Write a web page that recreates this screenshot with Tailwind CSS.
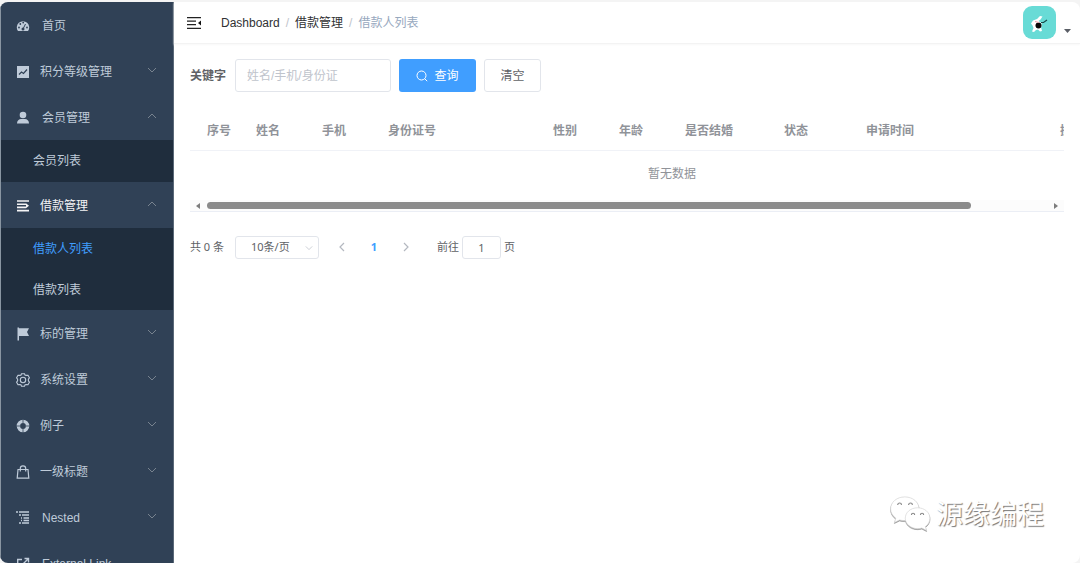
<!DOCTYPE html>
<html lang="zh-CN">
<head>
<meta charset="utf-8">
<title>借款人列表</title>
<script src="https://cdn.jsdelivr.net/npm/@tailwindcss/browser@4"></script>
</head>
<body class="h-screen overflow-hidden bg-[#f4f4f4] pt-0.5 font-['Liberation_Sans','Noto_Sans_CJK_SC',sans-serif] text-xs text-[#606266]">
<svg class="hidden">
  <symbol id="down" viewBox="0 0 10 10"><path d="M1 3l4 4 4-4" fill="none" stroke="currentColor"/></symbol>
  <symbol id="up" viewBox="0 0 10 10"><path d="M1 7l4-4 4 4" fill="none" stroke="currentColor"/></symbol>
</svg>
<div class="relative flex h-full overflow-hidden rounded-lg bg-white">
  <nav class="w-[174px] shrink-0 overflow-hidden border-x border-l-[#8995a1] border-r-[#5b6978] bg-[#304156] text-[#bfcbd9]">
    <a href="#" class="flex h-[46px] items-center pt-0.5 pl-[15px]">
      <svg class="mr-3 size-3.5" viewBox="0 0 14 14"><path fill="currentColor" d="M2 12A6.200 6.200 0 1 1 12 12z"/><g fill="#304156"><circle cx="3" cy="8.500" r=".9"/><circle cx="4.300" cy="5" r=".9"/><circle cx="7.200" cy="3.600" r=".9"/><circle cx="11" cy="8.500" r=".9"/><circle cx="7" cy="10" r="1.500"/></g><path d="M7 10l2.500-5" stroke="#304156"/></svg>
      <span>首页</span>
    </a>
    <a href="#" class="flex h-[46px] items-center pt-0.5 pr-4 pl-[15px]">
      <svg class="mr-2.5 size-3.5" viewBox="0 0 14 14"><path fill="currentColor" d="M1 1h12v12H1z"/><path d="M3 9.500l2.500-2.500 2 1.500 3.500-4" fill="none" stroke="#304156" stroke-width="1.200"/></svg>
      <span>积分等级管理</span><svg class="mb-1 ml-auto size-2.5 text-[#78838f]"><use href="#down"/></svg>
    </a>
    <a href="#" class="flex h-[46px] items-center pt-0.5 pr-4 pl-[15px]">
      <svg class="mr-3 size-3.5" viewBox="0 0 14 14" fill="currentColor"><circle cx="7" cy="4" r="3.300"/><path d="M1 12.500c0-3 2-4.500 4-4.500h4c2 0 4 1.500 4 4.500z"/></svg>
      <span>会员管理</span><svg class="mb-1 ml-auto size-2.5 text-[#78838f]"><use href="#up"/></svg>
    </a>
    <a href="#" class="flex h-[42px] items-center bg-[#1f2d3d] pl-8">会员列表</a>
    <a href="#" class="flex h-[46px] items-center pt-0.5 pr-4 pl-[15px] text-[#f4f4f5]">
      <svg class="mr-2.5 size-3.5" viewBox="0 0 14 14" stroke="currentColor" stroke-width="1.600"><path d="M1 2h12M1 5.200h9M1 8.400h9M1 11.600h12"/><path d="M10 4.300l3 2.500-3 2.500z" fill="currentColor" stroke="none"/></svg>
      <span>借款管理</span><svg class="mb-1 ml-auto size-2.5 text-[#78838f]"><use href="#up"/></svg>
    </a>
    <a href="#" class="flex h-[41px] items-center bg-[#1f2d3d] pl-8 text-[#409eff]">借款人列表</a>
    <a href="#" class="flex h-[41px] items-center bg-[#1f2d3d] pl-8">借款列表</a>
    <a href="#" class="flex h-[46px] items-center pt-0.5 pr-4 pl-[15px]">
      <svg class="mr-2.5 size-3.5" viewBox="0 0 14 14" fill="currentColor"><path d="M1.500 .5h1.500v13h-1.500zM3 1.300h10l-2 3.700 2 4H3z"/></svg>
      <span>标的管理</span><svg class="mb-1 ml-auto size-2.5 text-[#78838f]"><use href="#down"/></svg>
    </a>
    <a href="#" class="flex h-[46px] items-center pt-0.5 pr-4 pl-[15px]">
      <svg class="mr-2.5 size-3.5" viewBox="0 0 14 14" fill="none" stroke="currentColor" stroke-width="1.100"><path d="M5.500 .7h3l.6 1.500 1.600.2 1.300-.1 1.400 2.500-1 1.300v1.800l1 1.300-1.400 2.500-1.300-.1-1.600.2-.6 1.500h-3l-.6-1.500-1.600-.2-1.300.1L.6 9.200l1-1.300V6.100l-1-1.300L2 2.300l1.300.1 1.600-.2z"/><circle cx="7" cy="7" r="2.700"/></svg>
      <span>系统设置</span><svg class="mb-1 ml-auto size-2.5 text-[#78838f]"><use href="#down"/></svg>
    </a>
    <a href="#" class="flex h-[46px] items-center pt-0.5 pr-4 pl-[15px]">
      <svg class="mr-2.5 size-3.5" viewBox="0 0 14 14" fill="none"><circle cx="7" cy="7" r="4.600" stroke="currentColor" stroke-width="3.400"/><path d="M7 .5v3.500M7 10v3.500M.5 7h3.500M10 7h3.500" stroke="#304156" stroke-width=".8"/></svg>
      <span>例子</span><svg class="mb-1 ml-auto size-2.5 text-[#78838f]"><use href="#down"/></svg>
    </a>
    <a href="#" class="flex h-[46px] items-center pt-0.5 pr-4 pl-[15px]">
      <svg class="mr-2.5 size-3.5" viewBox="0 0 14 14" fill="none" stroke="currentColor" stroke-width="1.200"><path d="M2 4.500h10l.8 8.700H1.200zM4.300 6.500V3.500a2.700 2.700 0 0 1 5.400 0v3"/></svg>
      <span>一级标题</span><svg class="mb-1 ml-auto size-2.5 text-[#78838f]"><use href="#down"/></svg>
    </a>
    <a href="#" class="flex h-[46px] items-center pt-0.5 pr-4 pl-[15px]">
      <svg class="mr-3 size-3.5" viewBox="0 0 14 14" stroke="currentColor" stroke-width="1.300"><path d="M0 1h2M3 1h10M3 4h2M6 4h7M5 7h1M7.500 7H13M5 9.500h1M7.500 9.500H13M3 12h2M6 12h7"/></svg>
      <span>Nested</span><svg class="mb-1 ml-auto size-2.5 text-[#78838f]"><use href="#down"/></svg>
    </a>
    <a href="#" class="flex h-[46px] items-center pt-0.5 pl-[15px]">
      <svg class="mr-3 size-3.5" viewBox="0 0 14 14" fill="none" stroke="currentColor" stroke-width="1.400"><path d="M6 2.500H1.700v10h10V8M8.500 1.500h4v4M12.500 1.500L6.500 7.500"/></svg>
      <span>External Link</span>
    </a>
  </nav>

  <div class="min-w-0 flex-1">
    <header class="flex h-[42px] items-center border-b border-[#f3f3f3] pr-[9px] pl-[13px] shadow-[0_1px_2px_#f8f8f8]">
      <button aria-label="收起菜单"><svg class="block h-3 w-3.5" viewBox="0 0 14 12"><path d="M0 .7h14M0 4.200h9M0 7.700h9M0 11.300h14" stroke="#222" stroke-width="1.300"/><path d="M14 3.500v5L11 6z" fill="#111"/></svg></button>
      <nav aria-label="面包屑" class="ml-5 flex items-center text-[#303133]">
        <a href="#">Dashboard</a><span class="mx-1.5 text-[#c0c4cc]">/</span><a href="#">借款管理</a><span class="mx-1.5 text-[#c0c4cc]">/</span><span class="text-[#97a8be]">借款人列表</span>
      </nav>
      <button aria-label="用户菜单" class="ml-auto flex items-center">
        <svg class="size-[33px]" viewBox="0 0 33 33"><rect width="33" height="33" rx="9" fill="#68dbd6"/><path d="M8 17.500l2-3 4-1.500 3-3 2.500.5-2 3-2 1.500 3 2 .5 3-1 1 1 4-2 .5-2-2-2 .5-2 2-2-.5 1.500-3.500-1-2.500z" fill="#fff"/><circle cx="15.500" cy="19.500" r="3" fill="#080808"/><path d="M12 15.500l4 1" stroke="#e9a0a8"/><path d="M18 16.500l2.500 0 3.500-2.500" fill="none" stroke="#174b49" stroke-width="1.200"/></svg>
        <svg class="mt-4 ml-2 h-1 w-[7px]" viewBox="0 0 7 4"><path d="M0 0h7L3.500 4z" fill="#5a5e66"/></svg>
      </button>
    </header>

    <main class="px-4 pt-[15px]">
      <form class="flex items-center">
        <label for="kw" class="w-[45px] font-bold">关键字</label>
        <input id="kw" placeholder="姓名/手机/身份证" class="h-[33px] w-[156px] rounded-[3px] border border-[#e2e5eb] px-[11px] outline-none placeholder:text-[#c0c4cc]">
        <button type="button" class="ml-2 flex h-[33px] w-[77px] items-center justify-center gap-1.5 rounded-[3px] bg-[#409eff] text-white"><svg class="size-3" viewBox="0 0 12 12" fill="none" stroke="currentColor"><circle cx="5.500" cy="5.500" r="4.500"/><path d="M8.700 8.700l2.500 2.500"/></svg>查询</button>
        <button type="button" class="ml-2 h-[33px] w-[57px] rounded-[3px] border border-[#e2e5eb]">清空</button>
      </form>

      <div class="mt-[18px] border-b border-[#ebeef5]">
        <div class="overflow-hidden">
          <table class="w-[964px] table-fixed text-left text-[#909399]">
            <colgroup><col class="w-[58px]"><col class="w-[66px]"><col class="w-[66px]"><col class="w-[165px]"><col class="w-[66px]"><col class="w-[66px]"><col class="w-[99px]"><col class="w-[82px]"><col class="w-[194px]"><col></colgroup>
            <thead>
              <tr class="h-10 border-b border-[#f0f2f7]">
                <th class="pt-0.5 text-center">序号</th><th class="px-2 pt-0.5">姓名</th><th class="px-2 pt-0.5">手机</th><th class="px-2 pt-0.5">身份证号</th><th class="px-2 pt-0.5">性别</th><th class="px-2 pt-0.5">年龄</th><th class="px-2 pt-0.5">是否结婚</th><th class="px-2 pt-0.5">状态</th><th class="px-2 pt-0.5">申请时间</th><th class="px-2 pt-0.5">操作</th>
              </tr>
            </thead>
            <tbody><tr class="h-[50px]"><td colspan="10" class="pb-0.5 text-center">暂无数据</td></tr></tbody>
          </table>
        </div>
        <div class="flex h-[11px] items-center bg-[#fcfcfc] px-1.5">
          <svg class="mr-[7px] h-1.5 w-1" viewBox="0 0 4 6"><path d="M4 0v6L0 3z" fill="#7d7d7d"/></svg>
          <div class="flex-1"><div class="h-[7px] w-[91%] rounded-full bg-[#8b8b8b]"></div></div>
          <svg class="ml-[7px] h-1.5 w-1" viewBox="0 0 4 6"><path d="M0 0v6l4-3z" fill="#7d7d7d"/></svg>
        </div>
      </div>

      <div class="mt-[23px] flex h-6 items-center font-['Noto_Sans','Noto_Sans_CJK_SC',sans-serif] text-[11px]">
        <span class="w-[45px]">共 0 条</span>
        <div class="relative">
          <select aria-label="每页条数" class="block h-[23px] w-[84px] appearance-none rounded-[3px] border border-[#e2e5eb] pl-[15px] text-[11px]"><option>10条/页</option></select>
          <svg class="pointer-events-none absolute top-2 right-1.5 size-2 text-[#c0c4cc]"><use href="#down"/></svg>
        </div>
        <button aria-label="上一页" class="ml-[7px] flex w-8 justify-center text-[#b4b8c0]"><svg class="size-2.5" viewBox="0 0 10 10" fill="none" stroke="currentColor" stroke-width="1.200"><path d="M7 1L3 5l4 4"/></svg></button>
        <button class="w-8 font-bold text-[#409eff]">1</button>
        <button aria-label="下一页" class="flex w-8 justify-center text-[#b4b8c0]"><svg class="size-2.5" viewBox="0 0 10 10" fill="none" stroke="currentColor" stroke-width="1.200"><path d="M3 1l4 4-4 4"/></svg></button>
        <label for="page" class="ml-[15px]">前往</label>
        <input id="page" value="1" class="mx-[3px] h-[23px] w-[39px] rounded-[3px] border border-[#e2e5eb] text-center text-[11px] outline-none">
        <span>页</span>
      </div>
    </main>
  </div>

  <div class="absolute right-9 bottom-7 flex items-center gap-1 text-[27px] leading-10 text-white [text-shadow:1px_1px_1px_#777]">
    <svg class="mb-1 h-9 w-[43px] drop-shadow-[0_1px_0_#999]" viewBox="0 0 44 38" fill="#fff" stroke="#d4d4d4" stroke-width=".7"><path d="M16 2C7.500 2 1 7.500 1 14.500c0 4 2 7.500 5.500 10L5 29l5.500-2.700c2 .6 3.500.7 5.500.7 8.500 0 15-5.500 15-12.500S24.500 2 16 2z"/><path d="M29.500 13.500c-7.500 0-13 5-13 11s5.500 11 13 11c1.600 0 3-.2 4.500-.6l5 2.600-1.300-4.200c3-2.200 4.800-5.200 4.800-8.800 0-6-5.500-11-13-11z"/><g fill="none" stroke="#888" stroke-width="1.200"><path d="M8.500 10.500a2 2 0 0 1 4 0M20 10.500a2 2 0 0 1 4 0M23 21a1.700 1.700 0 0 1 3.400 0M32.500 21a1.700 1.700 0 0 1 3.400 0"/></g></svg>
    <span>源缘编程</span>
  </div>
</div>
</body>
</html>
